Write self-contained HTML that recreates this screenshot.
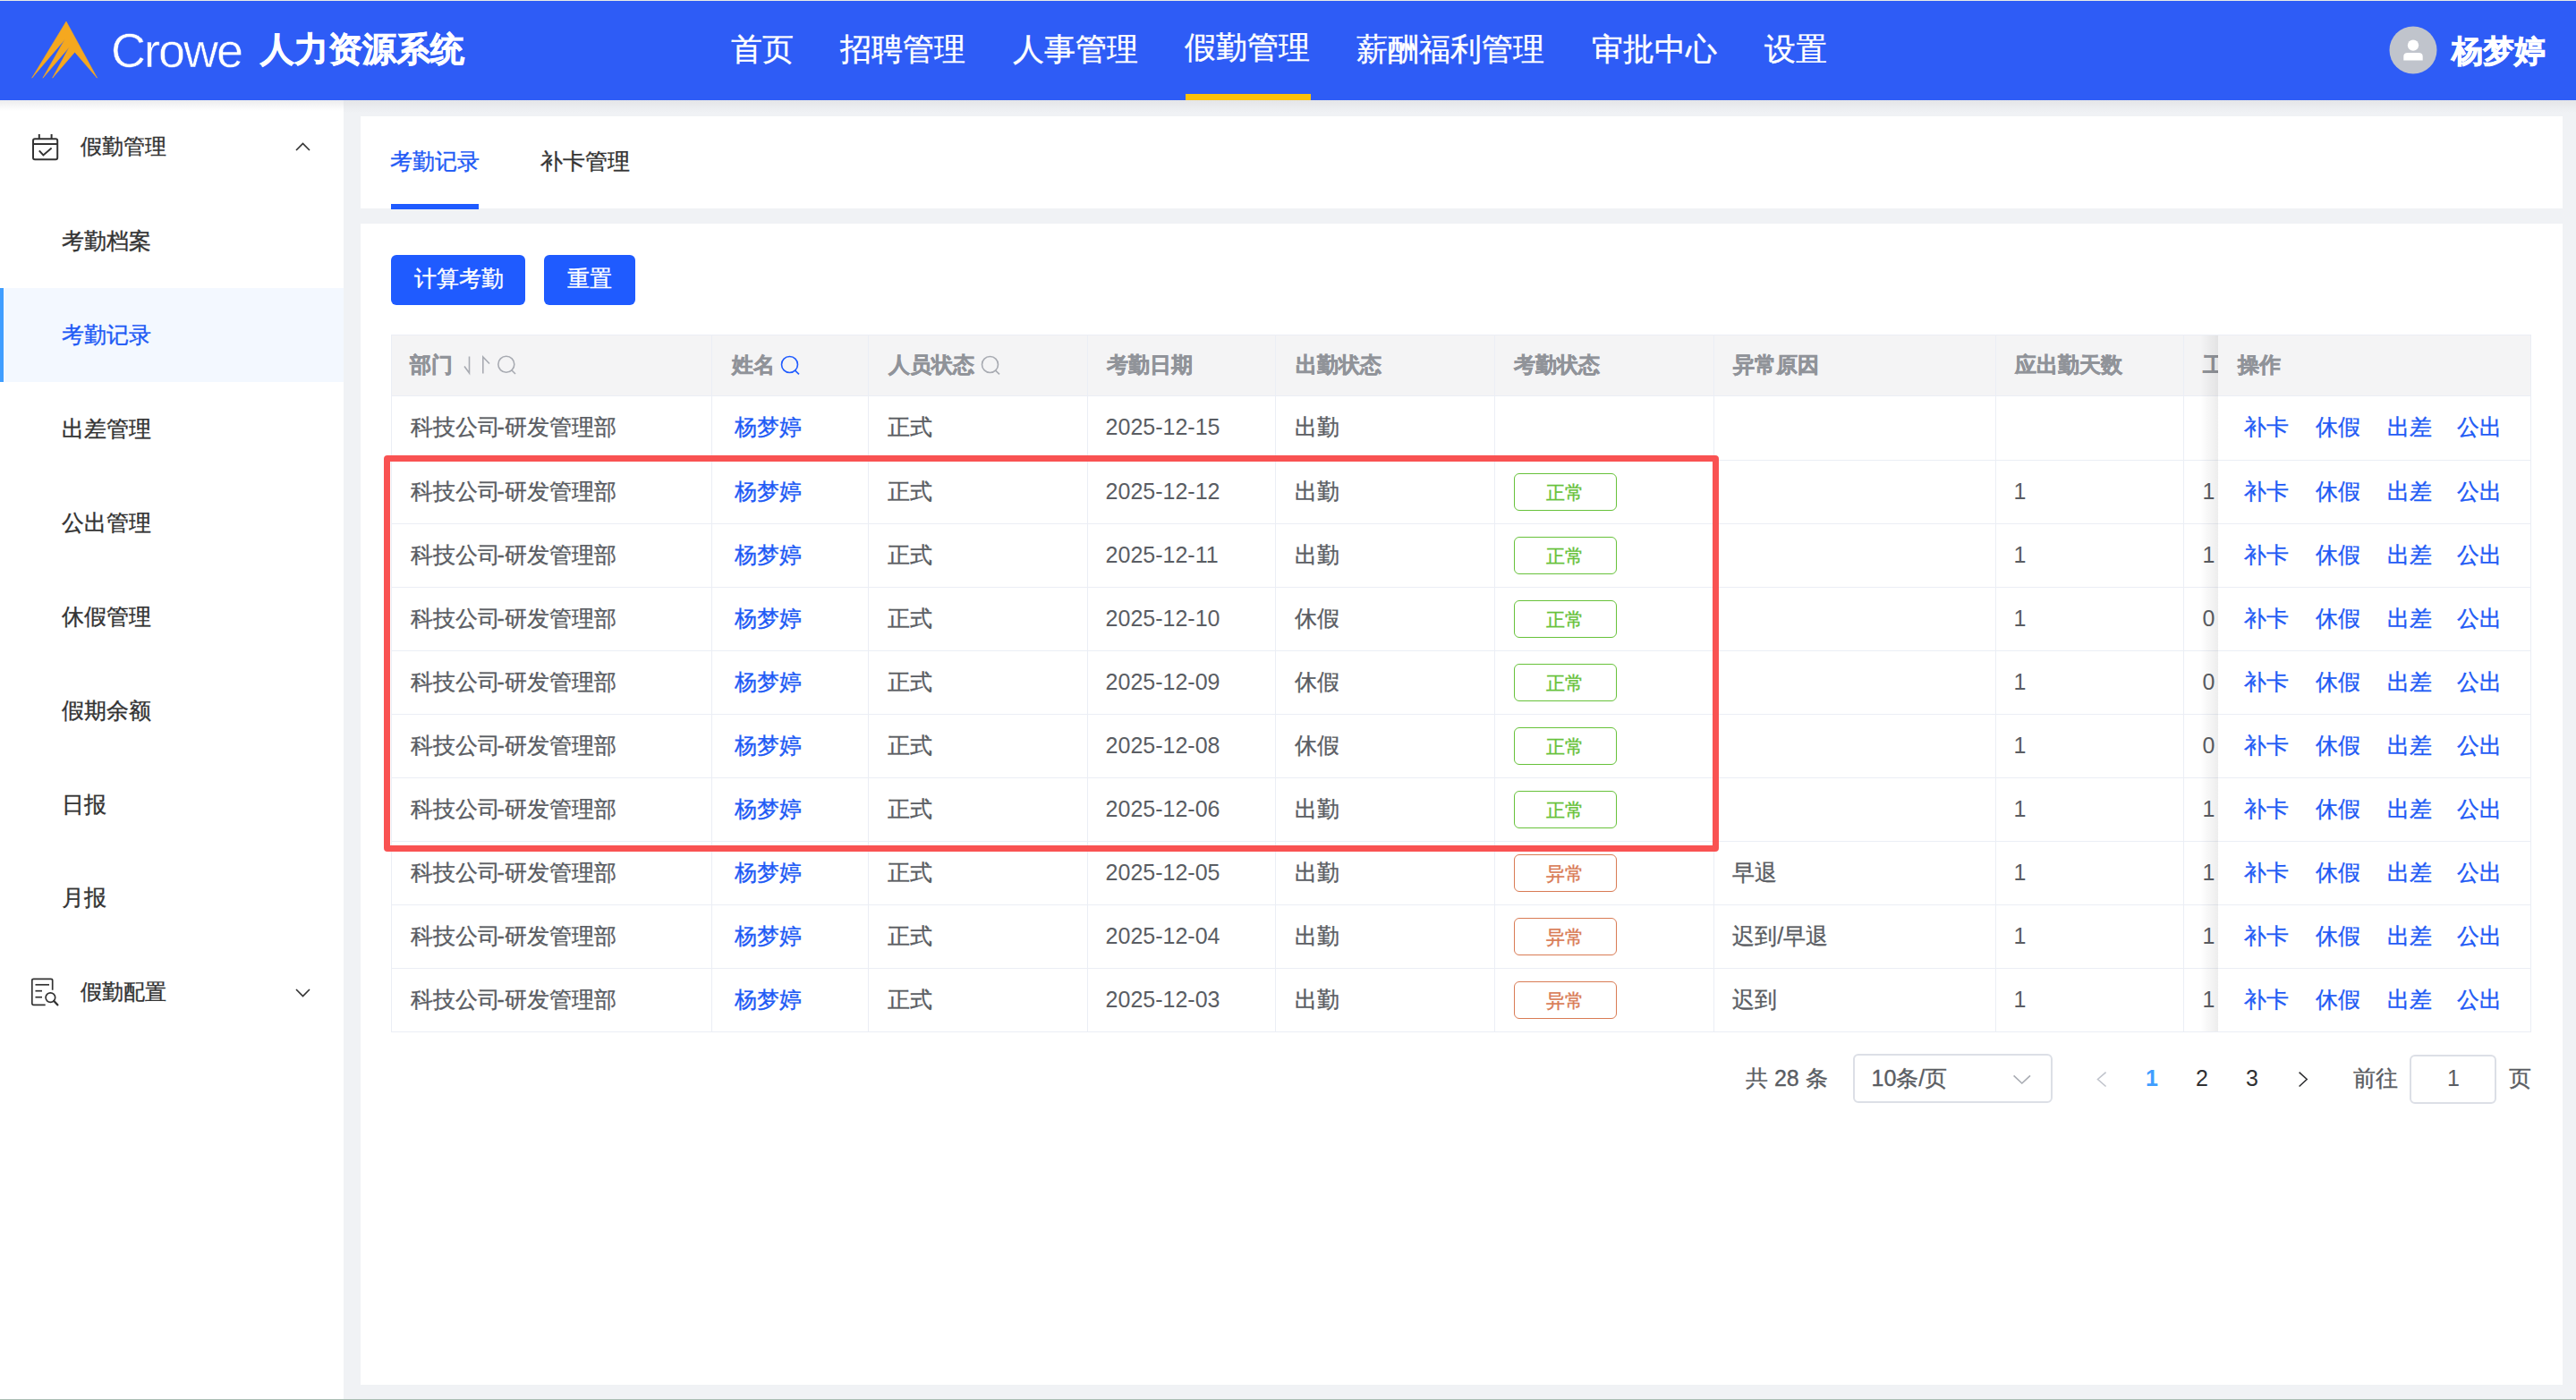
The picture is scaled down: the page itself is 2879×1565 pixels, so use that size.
<!DOCTYPE html>
<html><head><meta charset="utf-8"><title>考勤记录</title><style>
*{box-sizing:border-box}
html,body{margin:0;padding:0}
body{width:2879px;height:1565px;overflow:hidden;position:relative;background:#f0f2f5;font-family:"Liberation Sans",sans-serif;-webkit-text-stroke-width:0.35px}
.a{position:absolute;white-space:nowrap}
.d{-webkit-text-stroke-width:0}
</style></head><body>
<div class="a" style="left:0px;top:0px;width:2879px;height:112px;background:#2e5cf6"></div>
<div class="a" style="left:0px;top:0px;width:2879px;height:1px;background:#e9ebe6"></div>
<div class="a" style="left:0px;top:112px;width:2879px;height:14px;background:linear-gradient(#e4e5e8,rgba(240,242,245,0))"></div>
<svg class="a" style="left:0;top:0" width="130" height="112" viewBox="0 0 130 112"><path d="M74,24 L35.7,87.2 L72.5,43.9 L47.9,87.2 L77.5,52.5 L58.6,87.2 L83.6,58.2 L108.6,87.2 Z" fill="#f5a81f" stroke="#f5a81f" stroke-width="0.6" stroke-linejoin="round"/></svg>
<div class="a" style="left:124px;top:21px;font-size:54px;line-height:70px;color:#fff;letter-spacing:-2px;-webkit-text-stroke:0.5px #2e5cf6">Crowe</div>
<div class="a" style="left:291.35px;top:35.66px;font-size:38.3px;line-height:38.3px;color:#fff;font-weight:bold;-webkit-text-stroke:0.7px #fff;">人力资源系统</div>
<div class="a" style="left:816.94px;top:37.22px;font-size:35.2px;line-height:35.2px;color:#fff;">首页</div>
<div class="a" style="left:938.64px;top:37.22px;font-size:35.2px;line-height:35.2px;color:#fff;">招聘管理</div>
<div class="a" style="left:1131.54px;top:37.22px;font-size:35.2px;line-height:35.2px;color:#fff;">人事管理</div>
<div class="a" style="left:1323.94px;top:35.22px;font-size:35.2px;line-height:35.2px;color:#fff;">假勤管理</div>
<div class="a" style="left:1516.34px;top:37.22px;font-size:35.2px;line-height:35.2px;color:#fff;">薪酬福利管理</div>
<div class="a" style="left:1778.94px;top:37.22px;font-size:35.2px;line-height:35.2px;color:#fff;">审批中心</div>
<div class="a" style="left:1971.74px;top:37.22px;font-size:35.2px;line-height:35.2px;color:#fff;">设置</div>
<div class="a" style="left:1325px;top:105px;width:140px;height:7px;background:#fcc10a"></div>
<svg class="a" style="left:2670px;top:29px" width="54" height="54" viewBox="0 0 54 54"><circle cx="27" cy="27" r="26.5" fill="#c0c4cc"/><circle cx="27" cy="21.6" r="6.2" fill="#fff"/><path d="M16.3,38.4 L16.3,34 Q16.3,30 21,30 L33,30 Q37.7,30 37.7,34 L37.7,38.4 Z" fill="#fff"/></svg>
<div class="a" style="left:2740.45px;top:39.33px;font-size:35px;line-height:35px;color:#fff;font-weight:bold;-webkit-text-stroke:0.7px #fff;">杨梦婷</div>
<div class="a" style="left:0px;top:112px;width:384px;height:1453px;background:#fff"></div>
<div class="a" style="left:0px;top:112px;width:384px;height:12px;background:linear-gradient(#ececee,rgba(255,255,255,0))"></div>
<svg class="a" style="left:30px;top:145px" width="40" height="40" viewBox="30 145 40 40"><rect x="37" y="155.3" width="27.2" height="23" rx="2" fill="none" stroke="#333" stroke-width="2"/><line x1="37" y1="161" x2="64.2" y2="161" stroke="#333" stroke-width="2"/><line x1="43.8" y1="150" x2="43.8" y2="156" stroke="#333" stroke-width="2"/><line x1="57.6" y1="150" x2="57.6" y2="156" stroke="#333" stroke-width="2"/><polyline points="43.8,168.3 48.4,173.4 57.6,165.6" fill="none" stroke="#333" stroke-width="2"/></svg>
<div class="a" style="left:89.78px;top:152.08px;font-size:24px;line-height:24px;color:#333;">假勤管理</div>
<svg class="a" style="left:325px;top:150px" width="30" height="30" viewBox="325 150 30 30"><polyline points="331,168 338.5,160.5 346,168" fill="none" stroke="#333" stroke-width="1.6"/></svg>
<div class="a" style="left:69.25px;top:257.42px;font-size:25px;line-height:25px;color:#333;">考勤档案</div>
<div class="a" style="left:0px;top:322px;width:384px;height:104.5px;background:#f3f8ff"></div>
<div class="a" style="left:0px;top:322px;width:4px;height:104.5px;background:#409eff"></div>
<div class="a" style="left:69.25px;top:362.27px;font-size:25px;line-height:25px;color:#1f5bf5;">考勤记录</div>
<div class="a" style="left:69.25px;top:467.12px;font-size:25px;line-height:25px;color:#333;">出差管理</div>
<div class="a" style="left:69.25px;top:571.97px;font-size:25px;line-height:25px;color:#333;">公出管理</div>
<div class="a" style="left:69.25px;top:676.83px;font-size:25px;line-height:25px;color:#333;">休假管理</div>
<div class="a" style="left:69.25px;top:781.67px;font-size:25px;line-height:25px;color:#333;">假期余额</div>
<div class="a" style="left:69.25px;top:886.52px;font-size:25px;line-height:25px;color:#333;">日报</div>
<div class="a" style="left:69.25px;top:991.38px;font-size:25px;line-height:25px;color:#333;">月报</div>
<svg class="a" style="left:30px;top:1090px" width="40" height="40" viewBox="30 1090 40 40"><path d="M50.7,1123.3 L37.5,1123.3 Q35.8,1123.3 35.8,1121.6 L35.8,1096 Q35.8,1094.4 37.5,1094.4 L57,1094.4 Q58.7,1094.4 58.7,1096 L58.7,1106.8" fill="none" stroke="#333" stroke-width="1.7"/><line x1="39.5" y1="1100.8" x2="55" y2="1100.8" stroke="#333" stroke-width="1.7"/><line x1="39.5" y1="1107.7" x2="47" y2="1107.7" stroke="#333" stroke-width="1.7"/><line x1="39.5" y1="1114.7" x2="47" y2="1114.7" stroke="#333" stroke-width="1.7"/><circle cx="56.4" cy="1115.1" r="5.3" fill="none" stroke="#333" stroke-width="1.7"/><line x1="60.3" y1="1119" x2="64.3" y2="1123.3" stroke="#333" stroke-width="2.4" stroke-linecap="round"/></svg>
<div class="a" style="left:89.78px;top:1097.08px;font-size:24px;line-height:24px;color:#333;">假勤配置</div>
<svg class="a" style="left:325px;top:1095px" width="30" height="30" viewBox="325 1095 30 30"><polyline points="331,1106 338.5,1113.5 346,1106" fill="none" stroke="#333" stroke-width="1.6"/></svg>
<div class="a" style="left:403px;top:130px;width:2461px;height:103px;background:#fff"></div>
<div class="a" style="left:436.45px;top:168.38px;font-size:25px;line-height:25px;color:#1f5bf5;">考勤记录</div>
<div class="a" style="left:437px;top:228px;width:98px;height:6px;background:#1f5bff"></div>
<div class="a" style="left:604.25px;top:168.38px;font-size:25px;line-height:25px;color:#333;">补卡管理</div>
<div class="a" style="left:403px;top:250px;width:2461px;height:1298px;background:#fff"></div>
<div class="a" style="left:437px;top:285px;width:150px;height:56px;background:#1f5bff;border-radius:6px"></div>
<div class="a" style="left:462.55px;top:298.57px;font-size:25px;line-height:25px;color:#fff;">计算考勤</div>
<div class="a" style="left:608px;top:285px;width:102px;height:56px;background:#1f5bff;border-radius:6px"></div>
<div class="a" style="left:634.05px;top:298.57px;font-size:25px;line-height:25px;color:#fff;">重置</div>
<div class="a" style="left:437px;top:374px;width:2391px;height:68.39999999999998px;background:#f4f4f5"></div>
<div class="a" style="left:437px;top:374px;width:2392px;height:780px;border:1px solid #ebeef5"></div>
<div class="a" style="left:437px;top:442.40px;width:2391px;height:1px;background:#ebeef5"></div>
<div class="a" style="left:437px;top:514.40px;width:2391px;height:1px;background:#ebeef5"></div>
<div class="a" style="left:437px;top:585.40px;width:2391px;height:1px;background:#ebeef5"></div>
<div class="a" style="left:437px;top:656.40px;width:2391px;height:1px;background:#ebeef5"></div>
<div class="a" style="left:437px;top:727.40px;width:2391px;height:1px;background:#ebeef5"></div>
<div class="a" style="left:437px;top:798.40px;width:2391px;height:1px;background:#ebeef5"></div>
<div class="a" style="left:437px;top:869.40px;width:2391px;height:1px;background:#ebeef5"></div>
<div class="a" style="left:437px;top:940.40px;width:2391px;height:1px;background:#ebeef5"></div>
<div class="a" style="left:437px;top:1011.40px;width:2391px;height:1px;background:#ebeef5"></div>
<div class="a" style="left:437px;top:1082.40px;width:2391px;height:1px;background:#ebeef5"></div>
<div class="a" style="left:795.0px;top:374px;width:1px;height:779px;background:#ebeef5"></div>
<div class="a" style="left:969.7px;top:374px;width:1px;height:779px;background:#ebeef5"></div>
<div class="a" style="left:1214.9px;top:374px;width:1px;height:779px;background:#ebeef5"></div>
<div class="a" style="left:1424.7px;top:374px;width:1px;height:779px;background:#ebeef5"></div>
<div class="a" style="left:1669.7px;top:374px;width:1px;height:779px;background:#ebeef5"></div>
<div class="a" style="left:1914.8px;top:374px;width:1px;height:779px;background:#ebeef5"></div>
<div class="a" style="left:2229.8px;top:374px;width:1px;height:779px;background:#ebeef5"></div>
<div class="a" style="left:2439.9px;top:374px;width:1px;height:779px;background:#ebeef5"></div>
<div class="a" style="left:458.48px;top:396.18px;font-size:24px;line-height:24px;color:#909399;font-weight:bold;-webkit-text-stroke:0.5px #909399;">部门</div>
<svg class="a" style="left:515px;top:392px" width="70" height="32" viewBox="515 392 70 32"><polyline points="519,409.5 524.5,417 524.5,398.5" fill="none" stroke="#a8abb2" stroke-width="1.6"/><polyline points="539.8,417.5 539.8,399 547,406.5" fill="none" stroke="#a8abb2" stroke-width="1.6"/><circle cx="565.8" cy="407.3" r="9" fill="none" stroke="#a8abb2" stroke-width="1.6"/><line x1="571.5" y1="413.5" x2="576" y2="418" stroke="#a8abb2" stroke-width="1.6"/></svg>
<div class="a" style="left:817.78px;top:396.18px;font-size:24px;line-height:24px;color:#909399;font-weight:bold;-webkit-text-stroke:0.5px #909399;">姓名</div>
<svg class="a" style="left:868px;top:392px" width="30" height="32" viewBox="868 392 30 32"><circle cx="882.5" cy="407.5" r="9" fill="none" stroke="#1f5bff" stroke-width="1.6"/><line x1="888.3" y1="413.8" x2="893" y2="418.3" stroke="#1f5bff" stroke-width="1.6"/></svg>
<div class="a" style="left:992.98px;top:396.18px;font-size:24px;line-height:24px;color:#909399;font-weight:bold;-webkit-text-stroke:0.5px #909399;">人员状态</div>
<svg class="a" style="left:1092px;top:392px" width="30" height="32" viewBox="1092 392 30 32"><circle cx="1106.5" cy="407.5" r="9" fill="none" stroke="#a8abb2" stroke-width="1.6"/><line x1="1112.3" y1="413.8" x2="1117" y2="418.3" stroke="#a8abb2" stroke-width="1.6"/></svg>
<div class="a" style="left:1237.48px;top:396.18px;font-size:24px;line-height:24px;color:#909399;font-weight:bold;-webkit-text-stroke:0.5px #909399;">考勤日期</div>
<div class="a" style="left:1448.28px;top:396.18px;font-size:24px;line-height:24px;color:#909399;font-weight:bold;-webkit-text-stroke:0.5px #909399;">出勤状态</div>
<div class="a" style="left:1692.08px;top:396.18px;font-size:24px;line-height:24px;color:#909399;font-weight:bold;-webkit-text-stroke:0.5px #909399;">考勤状态</div>
<div class="a" style="left:1937.48px;top:396.18px;font-size:24px;line-height:24px;color:#909399;font-weight:bold;-webkit-text-stroke:0.5px #909399;">异常原因</div>
<div class="a" style="left:2252.48px;top:396.18px;font-size:24px;line-height:24px;color:#909399;font-weight:bold;-webkit-text-stroke:0.5px #909399;">应出勤天数</div>
<div class="a" style="left:2462.48px;top:396.18px;font-size:24px;line-height:24px;color:#909399;font-weight:bold;-webkit-text-stroke:0.5px #909399;">工作日</div>
<div class="a" style="left:458.75px;top:465.18px;font-size:25px;line-height:25px;color:#5a5d63;">科技公司<span style="margin-left:-3.3px">-</span>研发管理部</div>
<div class="a" style="left:820.85px;top:465.18px;font-size:25px;line-height:25px;color:#1f5bf5;">杨梦婷</div>
<div class="a" style="left:991.75px;top:465.18px;font-size:25px;line-height:25px;color:#5a5d63;">正式</div>
<div class="a d" style="left:1235.6px;top:465.30px;font-size:25px;line-height:25px;color:#5a5d63">2025-12-15</div>
<div class="a" style="left:1447.05px;top:465.18px;font-size:25px;line-height:25px;color:#5a5d63;">出勤</div>
<div class="a" style="left:458.75px;top:537.27px;font-size:25px;line-height:25px;color:#5a5d63;">科技公司<span style="margin-left:-3.3px">-</span>研发管理部</div>
<div class="a" style="left:820.85px;top:537.27px;font-size:25px;line-height:25px;color:#1f5bf5;">杨梦婷</div>
<div class="a" style="left:991.75px;top:537.27px;font-size:25px;line-height:25px;color:#5a5d63;">正式</div>
<div class="a d" style="left:1235.6px;top:537.40px;font-size:25px;line-height:25px;color:#5a5d63">2025-12-12</div>
<div class="a" style="left:1447.05px;top:537.27px;font-size:25px;line-height:25px;color:#5a5d63;">出勤</div>
<div class="a" style="left:1692px;top:529.10px;width:115px;height:42px;border:1.5px solid #67c23a;border-radius:6px"></div>
<div class="a" style="left:1727.97px;top:540.29px;font-size:21px;line-height:21px;color:#67c23a;">正常</div>
<div class="a d" style="left:2250.5px;top:537.40px;font-size:25px;line-height:25px;color:#5a5d63">1</div>
<div class="a d" style="left:2461.5px;top:537.40px;font-size:25px;line-height:25px;color:#5a5d63">1</div>
<div class="a" style="left:458.75px;top:608.27px;font-size:25px;line-height:25px;color:#5a5d63;">科技公司<span style="margin-left:-3.3px">-</span>研发管理部</div>
<div class="a" style="left:820.85px;top:608.27px;font-size:25px;line-height:25px;color:#1f5bf5;">杨梦婷</div>
<div class="a" style="left:991.75px;top:608.27px;font-size:25px;line-height:25px;color:#5a5d63;">正式</div>
<div class="a d" style="left:1235.6px;top:608.40px;font-size:25px;line-height:25px;color:#5a5d63">2025-12-11</div>
<div class="a" style="left:1447.05px;top:608.27px;font-size:25px;line-height:25px;color:#5a5d63;">出勤</div>
<div class="a" style="left:1692px;top:600.10px;width:115px;height:42px;border:1.5px solid #67c23a;border-radius:6px"></div>
<div class="a" style="left:1727.97px;top:611.29px;font-size:21px;line-height:21px;color:#67c23a;">正常</div>
<div class="a d" style="left:2250.5px;top:608.40px;font-size:25px;line-height:25px;color:#5a5d63">1</div>
<div class="a d" style="left:2461.5px;top:608.40px;font-size:25px;line-height:25px;color:#5a5d63">1</div>
<div class="a" style="left:458.75px;top:679.27px;font-size:25px;line-height:25px;color:#5a5d63;">科技公司<span style="margin-left:-3.3px">-</span>研发管理部</div>
<div class="a" style="left:820.85px;top:679.27px;font-size:25px;line-height:25px;color:#1f5bf5;">杨梦婷</div>
<div class="a" style="left:991.75px;top:679.27px;font-size:25px;line-height:25px;color:#5a5d63;">正式</div>
<div class="a d" style="left:1235.6px;top:679.40px;font-size:25px;line-height:25px;color:#5a5d63">2025-12-10</div>
<div class="a" style="left:1447.05px;top:679.27px;font-size:25px;line-height:25px;color:#5a5d63;">休假</div>
<div class="a" style="left:1692px;top:671.10px;width:115px;height:42px;border:1.5px solid #67c23a;border-radius:6px"></div>
<div class="a" style="left:1727.97px;top:682.29px;font-size:21px;line-height:21px;color:#67c23a;">正常</div>
<div class="a d" style="left:2250.5px;top:679.40px;font-size:25px;line-height:25px;color:#5a5d63">1</div>
<div class="a d" style="left:2461.5px;top:679.40px;font-size:25px;line-height:25px;color:#5a5d63">0</div>
<div class="a" style="left:458.75px;top:750.27px;font-size:25px;line-height:25px;color:#5a5d63;">科技公司<span style="margin-left:-3.3px">-</span>研发管理部</div>
<div class="a" style="left:820.85px;top:750.27px;font-size:25px;line-height:25px;color:#1f5bf5;">杨梦婷</div>
<div class="a" style="left:991.75px;top:750.27px;font-size:25px;line-height:25px;color:#5a5d63;">正式</div>
<div class="a d" style="left:1235.6px;top:750.40px;font-size:25px;line-height:25px;color:#5a5d63">2025-12-09</div>
<div class="a" style="left:1447.05px;top:750.27px;font-size:25px;line-height:25px;color:#5a5d63;">休假</div>
<div class="a" style="left:1692px;top:742.10px;width:115px;height:42px;border:1.5px solid #67c23a;border-radius:6px"></div>
<div class="a" style="left:1727.97px;top:753.29px;font-size:21px;line-height:21px;color:#67c23a;">正常</div>
<div class="a d" style="left:2250.5px;top:750.40px;font-size:25px;line-height:25px;color:#5a5d63">1</div>
<div class="a d" style="left:2461.5px;top:750.40px;font-size:25px;line-height:25px;color:#5a5d63">0</div>
<div class="a" style="left:458.75px;top:821.27px;font-size:25px;line-height:25px;color:#5a5d63;">科技公司<span style="margin-left:-3.3px">-</span>研发管理部</div>
<div class="a" style="left:820.85px;top:821.27px;font-size:25px;line-height:25px;color:#1f5bf5;">杨梦婷</div>
<div class="a" style="left:991.75px;top:821.27px;font-size:25px;line-height:25px;color:#5a5d63;">正式</div>
<div class="a d" style="left:1235.6px;top:821.40px;font-size:25px;line-height:25px;color:#5a5d63">2025-12-08</div>
<div class="a" style="left:1447.05px;top:821.27px;font-size:25px;line-height:25px;color:#5a5d63;">休假</div>
<div class="a" style="left:1692px;top:813.10px;width:115px;height:42px;border:1.5px solid #67c23a;border-radius:6px"></div>
<div class="a" style="left:1727.97px;top:824.29px;font-size:21px;line-height:21px;color:#67c23a;">正常</div>
<div class="a d" style="left:2250.5px;top:821.40px;font-size:25px;line-height:25px;color:#5a5d63">1</div>
<div class="a d" style="left:2461.5px;top:821.40px;font-size:25px;line-height:25px;color:#5a5d63">0</div>
<div class="a" style="left:458.75px;top:892.27px;font-size:25px;line-height:25px;color:#5a5d63;">科技公司<span style="margin-left:-3.3px">-</span>研发管理部</div>
<div class="a" style="left:820.85px;top:892.27px;font-size:25px;line-height:25px;color:#1f5bf5;">杨梦婷</div>
<div class="a" style="left:991.75px;top:892.27px;font-size:25px;line-height:25px;color:#5a5d63;">正式</div>
<div class="a d" style="left:1235.6px;top:892.40px;font-size:25px;line-height:25px;color:#5a5d63">2025-12-06</div>
<div class="a" style="left:1447.05px;top:892.27px;font-size:25px;line-height:25px;color:#5a5d63;">出勤</div>
<div class="a" style="left:1692px;top:884.10px;width:115px;height:42px;border:1.5px solid #67c23a;border-radius:6px"></div>
<div class="a" style="left:1727.97px;top:895.29px;font-size:21px;line-height:21px;color:#67c23a;">正常</div>
<div class="a d" style="left:2250.5px;top:892.40px;font-size:25px;line-height:25px;color:#5a5d63">1</div>
<div class="a d" style="left:2461.5px;top:892.40px;font-size:25px;line-height:25px;color:#5a5d63">1</div>
<div class="a" style="left:458.75px;top:963.27px;font-size:25px;line-height:25px;color:#5a5d63;">科技公司<span style="margin-left:-3.3px">-</span>研发管理部</div>
<div class="a" style="left:820.85px;top:963.27px;font-size:25px;line-height:25px;color:#1f5bf5;">杨梦婷</div>
<div class="a" style="left:991.75px;top:963.27px;font-size:25px;line-height:25px;color:#5a5d63;">正式</div>
<div class="a d" style="left:1235.6px;top:963.40px;font-size:25px;line-height:25px;color:#5a5d63">2025-12-05</div>
<div class="a" style="left:1447.05px;top:963.27px;font-size:25px;line-height:25px;color:#5a5d63;">出勤</div>
<div class="a" style="left:1692px;top:955.10px;width:115px;height:42px;border:1.5px solid #d97b54;border-radius:6px"></div>
<div class="a" style="left:1727.97px;top:966.29px;font-size:21px;line-height:21px;color:#d97b54;">异常</div>
<div class="a" style="left:1936.25px;top:963.27px;font-size:25px;line-height:25px;color:#5a5d63;">早退</div>
<div class="a d" style="left:2250.5px;top:963.40px;font-size:25px;line-height:25px;color:#5a5d63">1</div>
<div class="a d" style="left:2461.5px;top:963.40px;font-size:25px;line-height:25px;color:#5a5d63">1</div>
<div class="a" style="left:458.75px;top:1034.28px;font-size:25px;line-height:25px;color:#5a5d63;">科技公司<span style="margin-left:-3.3px">-</span>研发管理部</div>
<div class="a" style="left:820.85px;top:1034.28px;font-size:25px;line-height:25px;color:#1f5bf5;">杨梦婷</div>
<div class="a" style="left:991.75px;top:1034.28px;font-size:25px;line-height:25px;color:#5a5d63;">正式</div>
<div class="a d" style="left:1235.6px;top:1034.40px;font-size:25px;line-height:25px;color:#5a5d63">2025-12-04</div>
<div class="a" style="left:1447.05px;top:1034.28px;font-size:25px;line-height:25px;color:#5a5d63;">出勤</div>
<div class="a" style="left:1692px;top:1026.10px;width:115px;height:42px;border:1.5px solid #d97b54;border-radius:6px"></div>
<div class="a" style="left:1727.97px;top:1037.30px;font-size:21px;line-height:21px;color:#d97b54;">异常</div>
<div class="a" style="left:1936.25px;top:1034.28px;font-size:25px;line-height:25px;color:#5a5d63;">迟到/早退</div>
<div class="a d" style="left:2250.5px;top:1034.40px;font-size:25px;line-height:25px;color:#5a5d63">1</div>
<div class="a d" style="left:2461.5px;top:1034.40px;font-size:25px;line-height:25px;color:#5a5d63">1</div>
<div class="a" style="left:458.75px;top:1105.28px;font-size:25px;line-height:25px;color:#5a5d63;">科技公司<span style="margin-left:-3.3px">-</span>研发管理部</div>
<div class="a" style="left:820.85px;top:1105.28px;font-size:25px;line-height:25px;color:#1f5bf5;">杨梦婷</div>
<div class="a" style="left:991.75px;top:1105.28px;font-size:25px;line-height:25px;color:#5a5d63;">正式</div>
<div class="a d" style="left:1235.6px;top:1105.40px;font-size:25px;line-height:25px;color:#5a5d63">2025-12-03</div>
<div class="a" style="left:1447.05px;top:1105.28px;font-size:25px;line-height:25px;color:#5a5d63;">出勤</div>
<div class="a" style="left:1692px;top:1097.10px;width:115px;height:42px;border:1.5px solid #d97b54;border-radius:6px"></div>
<div class="a" style="left:1727.97px;top:1108.30px;font-size:21px;line-height:21px;color:#d97b54;">异常</div>
<div class="a" style="left:1936.25px;top:1105.28px;font-size:25px;line-height:25px;color:#5a5d63;">迟到</div>
<div class="a d" style="left:2250.5px;top:1105.40px;font-size:25px;line-height:25px;color:#5a5d63">1</div>
<div class="a d" style="left:2461.5px;top:1105.40px;font-size:25px;line-height:25px;color:#5a5d63">1</div>
<div class="a" style="left:2459px;top:375px;width:20px;height:778px;background:linear-gradient(90deg,rgba(0,0,0,0),rgba(0,0,0,0.07))"></div>
<div class="a" style="left:2479px;top:375px;width:349px;height:67.39999999999998px;background:#f4f4f5"></div>
<div class="a" style="left:2479px;top:442.9px;width:349px;height:710.1px;background:#fff"></div>
<div class="a" style="left:2479px;top:442.40px;width:349px;height:1px;background:#ebeef5"></div>
<div class="a" style="left:2479px;top:514.40px;width:349px;height:1px;background:#ebeef5"></div>
<div class="a" style="left:2479px;top:585.40px;width:349px;height:1px;background:#ebeef5"></div>
<div class="a" style="left:2479px;top:656.40px;width:349px;height:1px;background:#ebeef5"></div>
<div class="a" style="left:2479px;top:727.40px;width:349px;height:1px;background:#ebeef5"></div>
<div class="a" style="left:2479px;top:798.40px;width:349px;height:1px;background:#ebeef5"></div>
<div class="a" style="left:2479px;top:869.40px;width:349px;height:1px;background:#ebeef5"></div>
<div class="a" style="left:2479px;top:940.40px;width:349px;height:1px;background:#ebeef5"></div>
<div class="a" style="left:2479px;top:1011.40px;width:349px;height:1px;background:#ebeef5"></div>
<div class="a" style="left:2479px;top:1082.40px;width:349px;height:1px;background:#ebeef5"></div>
<div class="a" style="left:2500.98px;top:396.18px;font-size:24px;line-height:24px;color:#909399;font-weight:bold;-webkit-text-stroke:0.5px #909399;">操作</div>
<div class="a" style="left:2508.25px;top:465.18px;font-size:25px;line-height:25px;color:#1f5bf5;">补卡</div>
<div class="a" style="left:2587.65px;top:465.18px;font-size:25px;line-height:25px;color:#1f5bf5;">休假</div>
<div class="a" style="left:2667.85px;top:465.18px;font-size:25px;line-height:25px;color:#1f5bf5;">出差</div>
<div class="a" style="left:2745.65px;top:465.18px;font-size:25px;line-height:25px;color:#1f5bf5;">公出</div>
<div class="a" style="left:2508.25px;top:537.27px;font-size:25px;line-height:25px;color:#1f5bf5;">补卡</div>
<div class="a" style="left:2587.65px;top:537.27px;font-size:25px;line-height:25px;color:#1f5bf5;">休假</div>
<div class="a" style="left:2667.85px;top:537.27px;font-size:25px;line-height:25px;color:#1f5bf5;">出差</div>
<div class="a" style="left:2745.65px;top:537.27px;font-size:25px;line-height:25px;color:#1f5bf5;">公出</div>
<div class="a" style="left:2508.25px;top:608.27px;font-size:25px;line-height:25px;color:#1f5bf5;">补卡</div>
<div class="a" style="left:2587.65px;top:608.27px;font-size:25px;line-height:25px;color:#1f5bf5;">休假</div>
<div class="a" style="left:2667.85px;top:608.27px;font-size:25px;line-height:25px;color:#1f5bf5;">出差</div>
<div class="a" style="left:2745.65px;top:608.27px;font-size:25px;line-height:25px;color:#1f5bf5;">公出</div>
<div class="a" style="left:2508.25px;top:679.27px;font-size:25px;line-height:25px;color:#1f5bf5;">补卡</div>
<div class="a" style="left:2587.65px;top:679.27px;font-size:25px;line-height:25px;color:#1f5bf5;">休假</div>
<div class="a" style="left:2667.85px;top:679.27px;font-size:25px;line-height:25px;color:#1f5bf5;">出差</div>
<div class="a" style="left:2745.65px;top:679.27px;font-size:25px;line-height:25px;color:#1f5bf5;">公出</div>
<div class="a" style="left:2508.25px;top:750.27px;font-size:25px;line-height:25px;color:#1f5bf5;">补卡</div>
<div class="a" style="left:2587.65px;top:750.27px;font-size:25px;line-height:25px;color:#1f5bf5;">休假</div>
<div class="a" style="left:2667.85px;top:750.27px;font-size:25px;line-height:25px;color:#1f5bf5;">出差</div>
<div class="a" style="left:2745.65px;top:750.27px;font-size:25px;line-height:25px;color:#1f5bf5;">公出</div>
<div class="a" style="left:2508.25px;top:821.27px;font-size:25px;line-height:25px;color:#1f5bf5;">补卡</div>
<div class="a" style="left:2587.65px;top:821.27px;font-size:25px;line-height:25px;color:#1f5bf5;">休假</div>
<div class="a" style="left:2667.85px;top:821.27px;font-size:25px;line-height:25px;color:#1f5bf5;">出差</div>
<div class="a" style="left:2745.65px;top:821.27px;font-size:25px;line-height:25px;color:#1f5bf5;">公出</div>
<div class="a" style="left:2508.25px;top:892.27px;font-size:25px;line-height:25px;color:#1f5bf5;">补卡</div>
<div class="a" style="left:2587.65px;top:892.27px;font-size:25px;line-height:25px;color:#1f5bf5;">休假</div>
<div class="a" style="left:2667.85px;top:892.27px;font-size:25px;line-height:25px;color:#1f5bf5;">出差</div>
<div class="a" style="left:2745.65px;top:892.27px;font-size:25px;line-height:25px;color:#1f5bf5;">公出</div>
<div class="a" style="left:2508.25px;top:963.27px;font-size:25px;line-height:25px;color:#1f5bf5;">补卡</div>
<div class="a" style="left:2587.65px;top:963.27px;font-size:25px;line-height:25px;color:#1f5bf5;">休假</div>
<div class="a" style="left:2667.85px;top:963.27px;font-size:25px;line-height:25px;color:#1f5bf5;">出差</div>
<div class="a" style="left:2745.65px;top:963.27px;font-size:25px;line-height:25px;color:#1f5bf5;">公出</div>
<div class="a" style="left:2508.25px;top:1034.28px;font-size:25px;line-height:25px;color:#1f5bf5;">补卡</div>
<div class="a" style="left:2587.65px;top:1034.28px;font-size:25px;line-height:25px;color:#1f5bf5;">休假</div>
<div class="a" style="left:2667.85px;top:1034.28px;font-size:25px;line-height:25px;color:#1f5bf5;">出差</div>
<div class="a" style="left:2745.65px;top:1034.28px;font-size:25px;line-height:25px;color:#1f5bf5;">公出</div>
<div class="a" style="left:2508.25px;top:1105.28px;font-size:25px;line-height:25px;color:#1f5bf5;">补卡</div>
<div class="a" style="left:2587.65px;top:1105.28px;font-size:25px;line-height:25px;color:#1f5bf5;">休假</div>
<div class="a" style="left:2667.85px;top:1105.28px;font-size:25px;line-height:25px;color:#1f5bf5;">出差</div>
<div class="a" style="left:2745.65px;top:1105.28px;font-size:25px;line-height:25px;color:#1f5bf5;">公出</div>
<div class="a" style="left:428.7px;top:509.1px;width:1492px;height:443px;border:7px solid #f95252;border-radius:4px"></div>
<div class="a" style="left:1950.95px;top:1192.88px;font-size:25px;line-height:25px;color:#5a5d63;">共 28 条</div>
<div class="a" style="left:2070.5px;top:1178.2px;width:223px;height:55px;border:2px solid #dcdfe6;border-radius:6px"></div>
<div class="a" style="left:2091.55px;top:1192.88px;font-size:25px;line-height:25px;color:#5a5d63;">10条/页</div>
<svg class="a" style="left:2245px;top:1195px" width="30" height="22" viewBox="2245 1195 30 22"><polyline points="2250.6,1202.3 2259.8,1211 2269,1202.3" fill="none" stroke="#a8abb2" stroke-width="1.6"/></svg>
<svg class="a" style="left:2335px;top:1190px" width="260" height="32" viewBox="2335 1190 260 32"><polyline points="2353.6,1198.6 2344.5,1206.5 2353.6,1214.5" fill="none" stroke="#c0c4cc" stroke-width="1.6"/><polyline points="2569.6,1198.6 2578.2,1206.5 2569.6,1214.5" fill="none" stroke="#303133" stroke-width="1.6"/></svg>
<div class="a d" style="left:2398px;top:1193.0px;font-size:25px;line-height:25px;color:#409eff;font-weight:bold">1</div>
<div class="a d" style="left:2454px;top:1193.0px;font-size:25px;line-height:25px;color:#303133">2</div>
<div class="a d" style="left:2510px;top:1193.0px;font-size:25px;line-height:25px;color:#303133">3</div>
<div class="a" style="left:2629.55px;top:1192.88px;font-size:25px;line-height:25px;color:#5a5d63;">前往</div>
<div class="a" style="left:2693.3px;top:1178.5px;width:97px;height:55px;border:2px solid #dcdfe6;border-radius:6px"></div>
<div class="a d" style="left:2735px;top:1193.0px;font-size:25px;line-height:25px;color:#5a5d63">1</div>
<div class="a" style="left:2804.25px;top:1192.88px;font-size:25px;line-height:25px;color:#5a5d63;">页</div>
<div class="a" style="left:0px;top:1564px;width:2879px;height:1px;background:#a9bcb2"></div>
</body></html>
